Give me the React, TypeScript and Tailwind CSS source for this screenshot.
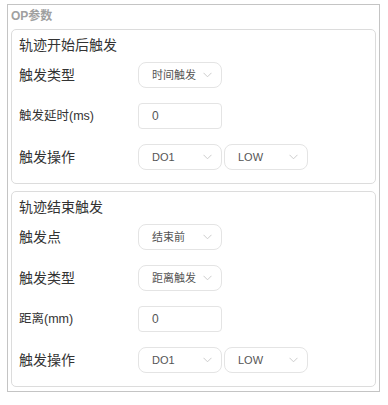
import type { ReactNode } from "react";

function Chevron() {
  return (
    <svg width="9" height="6" viewBox="0 0 9 6" className="shrink-0">
      <path d="M0.5 0.8 L4.5 4.8 L8.5 0.8" fill="none" stroke="#cccccc" strokeWidth="1" />
    </svg>
  );
}

function Select({ value }: { value: string }) {
  return (
    <div className="flex h-[26px] w-[84px] items-center justify-between rounded-[8px] border border-[#e4e4e4] bg-white pl-[13px] pr-[9px] text-[11px] text-[#555]">
      <span className="whitespace-nowrap">{value}</span>
      <Chevron />
    </div>
  );
}

function Input({ value }: { value: string }) {
  return (
    <div className="flex h-[26px] w-[84px] items-center rounded-[4px] border border-[#e4e4e4] bg-white pl-[13px] text-[12px] text-[#555]">
      {value}
    </div>
  );
}

function Row({ label, small, children }: { label: string; small?: boolean; children: ReactNode }) {
  return (
    <div className="flex h-[26px] items-center">
      <div className={`w-[119px] text-[#333] ${small ? "text-[12.5px]" : "text-[14px]"}`}>{label}</div>
      <div className="flex gap-[2px]">{children}</div>
    </div>
  );
}

function Card({ title, children }: { title: string; children: ReactNode }) {
  return (
    <div className="rounded-[5px] border border-[#dcdcdc] px-[7px] pb-[13px] pt-[5px]">
      <div className="text-[14px] leading-[20px] text-[#333]">{title}</div>
      <div className="mt-[7px] flex flex-col gap-[15px]">{children}</div>
    </div>
  );
}

export default function App() {
  return (
    <div className="h-[405px] w-[388px] bg-white pl-[7px] pt-[4px]" style={{ fontFamily: '"Liberation Sans", "Noto Sans CJK SC", sans-serif' }}>
      <div className="w-[373px] border border-[#c4c4c4] pb-[4px] pl-[3px] pr-[3px]">
        <div className="pt-[4px] text-[12px] font-bold leading-[14px] text-[#a0a0a0]">OP参数</div>
        <div className="mt-[6px] flex flex-col gap-[7px]">
          <Card title="轨迹开始后触发">
            <Row label="触发类型">
              <Select value="时间触发" />
            </Row>
            <Row label="触发延时(ms)" small>
              <Input value="0" />
            </Row>
            <Row label="触发操作">
              <Select value="DO1" />
              <Select value="LOW" />
            </Row>
          </Card>
          <Card title="轨迹结束触发">
            <Row label="触发点">
              <Select value="结束前" />
            </Row>
            <Row label="触发类型">
              <Select value="距离触发" />
            </Row>
            <Row label="距离(mm)" small>
              <Input value="0" />
            </Row>
            <Row label="触发操作">
              <Select value="DO1" />
              <Select value="LOW" />
            </Row>
          </Card>
        </div>
      </div>
    </div>
  );
}
